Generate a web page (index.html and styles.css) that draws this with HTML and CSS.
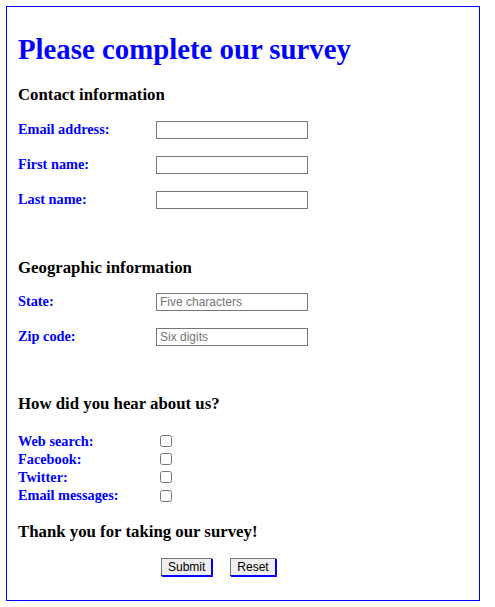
FILE: index.html
```html
<!DOCTYPE html>
<html lang="en">
<head>
<meta charset="utf-8">
<title>Survey</title>
<link rel="stylesheet" href="styles.css">
</head>
<body>
<form class="survey">
  <h1 class="title">Please complete our survey</h1>

  <h3 class="section section--first">Contact information</h3>
  <div class="fields">
    <div class="field"><label class="label" for="email">Email address:</label><input class="text" type="text" id="email"></div>
    <div class="field"><label class="label" for="first">First name:</label><input class="text" type="text" id="first"></div>
    <div class="field"><label class="label" for="last">Last name:</label><input class="text" type="text" id="last"></div>
  </div>

  <h3 class="section section--geo">Geographic information</h3>
  <div class="fields fields--tight">
    <div class="field"><label class="label" for="state">State:</label><input class="text" type="text" id="state" placeholder="Five characters"></div>
    <div class="field"><label class="label" for="zip">Zip code:</label><input class="text" type="text" id="zip" placeholder="Six digits"></div>
  </div>

  <h3 class="section section--spaced">How did you hear about us?</h3>
  <div class="checks">
    <div class="check"><label class="label label--check" for="web">Web search:</label><input class="box" type="checkbox" id="web"></div>
    <div class="check"><label class="label label--check" for="fb">Facebook:</label><input class="box" type="checkbox" id="fb"></div>
    <div class="check"><label class="label label--check" for="tw">Twitter:</label><input class="box" type="checkbox" id="tw"></div>
    <div class="check"><label class="label label--check" for="em">Email messages:</label><input class="box" type="checkbox" id="em"></div>
  </div>

  <h3 class="section section--thanks">Thank you for taking our survey!</h3>
  <div class="actions">
    <input class="btn" type="submit" value="Submit">
    <input class="btn" type="reset" value="Reset">
  </div>
</form>
</body>
</html>
```

FILE: styles.css
```css
html, body {
  margin: 0;
  padding: 0;
  background: #ffffff;
}

body {
  padding: 6px 0 0 6px;
  font-family: "Liberation Serif", "Times New Roman", serif;
}

.survey {
  box-sizing: border-box;
  width: 474px;
  height: 595px;
  border: 1px solid #0000ff;
  padding: 0 0 0 11px;
}

.title {
  margin: 26px 0 0;
  font-size: 28.8px;
  line-height: 33px;
  font-weight: bold;
  color: #0000ff;
}

.section {
  margin: 0;
  font-size: 16.8px;
  line-height: 20px;
  font-weight: bold;
  color: #000000;
}

.section--first { margin-top: 19px; }
.section--geo { margin-top: 49px; }
.section--spaced { margin-top: 48px; }
.section--thanks { margin-top: 17.8px; }

.fields {
  display: flex;
  flex-direction: column;
  gap: 17px;
  margin-top: 16px;
}

.fields--tight { margin-top: 15px; }

.field {
  display: flex;
  align-items: flex-start;
  height: 18px;
}

.label {
  width: 138px;
  flex: none;
  font-size: 14.3px;
  line-height: 16px;
  font-weight: bold;
  color: #0000ff;
}

.text {
  box-sizing: border-box;
  width: 152px;
  height: 18px;
  margin: 0;
  padding: 0 3px;
  border: 1px solid #767676;
  border-radius: 0;
  font-family: "Liberation Sans", Arial, sans-serif;
  font-size: 12px;
  background: #ffffff;
}

.text::placeholder {
  color: #757575;
}

.checks {
  margin-top: 17.5px;
  display: flex;
  flex-direction: column;
}

.check {
  display: flex;
  align-items: center;
  height: 18.3px;
}

.label--check {
  line-height: 18.3px;
}

.box {
  width: 12px;
  height: 12px;
  margin: 0 0 0 4px;
}

.actions {
  display: flex;
  gap: 18px;
  margin-top: 16px;
  padding-left: 143px;
}

.btn {
  box-sizing: border-box;
  height: 18px;
  margin: 0;
  padding: 0 6px;
  border: 1px solid #767676;
  border-right-color: #0000ff;
  border-bottom-color: #0000ff;
  border-radius: 0;
  box-shadow: 1px 1px 0 #0000ff;
  background: #efefef;
  color: #000000;
  font-family: "Liberation Sans", Arial, sans-serif;
  font-size: 12px;
  line-height: 14px;
}
```
